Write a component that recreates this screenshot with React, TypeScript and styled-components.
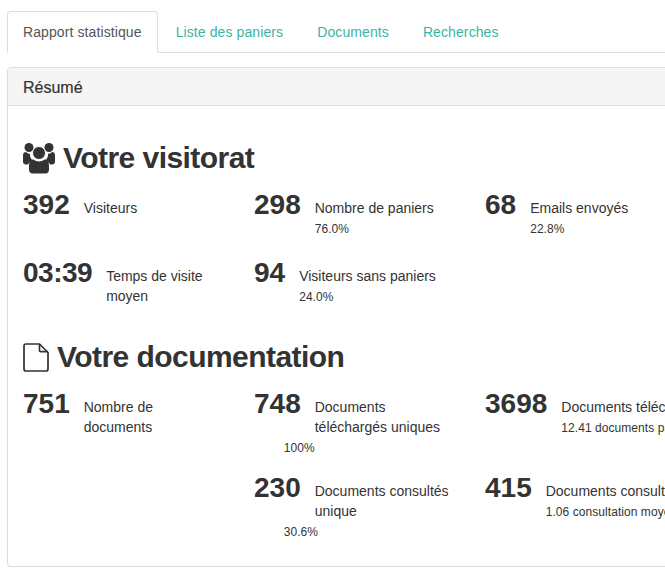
import React from 'react';
import styled, { createGlobalStyle } from 'styled-components';

const GlobalStyle = createGlobalStyle`
  html, body {
    margin: 0;
    padding: 0;
    background: #fff;
    overflow: hidden;
  }
  body {
    font-family: "Liberation Sans", Arial, sans-serif;
    font-size: 14px;
    line-height: 20px;
    color: #333;
  }
`;

const Page = styled.div`
  width: 800px;
  padding: 11px 0 0 7px;
`;

const Tabs = styled.ul`
  display: flex;
  list-style: none;
  margin: 0 0 14px;
  padding: 0;
  height: 41px;
  border-bottom: 1px solid #ddd;
`;

const Tab = styled.li<{ $active?: boolean }>`
  box-sizing: border-box;
  height: 42px;
  padding: 10px 15px;
  margin-right: 2px;
  letter-spacing: 0.1px;
  border: 1px solid ${p => (p.$active ? '#ddd' : 'transparent')};
  border-bottom-color: ${p => (p.$active ? '#fff' : 'transparent')};
  border-radius: 4px 4px 0 0;
  background: ${p => (p.$active ? '#fff' : 'transparent')};
  color: ${p => (p.$active ? '#555' : '#3ab5a6')};
`;

const Panel = styled.section`
  height: 500px;
  box-sizing: border-box;
  border: 1px solid #ddd;
  border-radius: 4px;
  box-shadow: 0 1px 1px rgba(0, 0, 0, 0.05);
`;

const PanelHeading = styled.h3`
  margin: 0;
  height: 38px;
  box-sizing: border-box;
  padding: 11px 15px 0;
  font-size: 16px;
  line-height: 18px;
  font-weight: 400;
  color: #333;
  background: #f5f5f5;
  border-bottom: 1px solid #ddd;
  border-radius: 3px 3px 0 0;
  -webkit-text-stroke: 0.2px #333;
`;

const PanelBody = styled.div`
  padding: 32px 15px 0;
`;

const SectionTitle = styled.h1`
  display: flex;
  align-items: center;
  gap: 8px;
  margin: 0 0 11px;
  height: 40px;
  font-size: 30px;
  line-height: 40px;
  font-weight: 700;
  letter-spacing: -0.55px;
  color: #333;
`;

const StatGrid = styled.div`
  display: grid;
  grid-template-columns: repeat(3, 231px);
  margin-bottom: 12px;
`;

const Stat = styled.div`
  display: flex;
  align-items: flex-start;
  gap: 14px;
  box-sizing: border-box;
  min-height: 68px;
  padding-bottom: 14px;
`;

const StatNumber = styled.span<{ $tight?: boolean }>`
  font-size: 28px;
  line-height: 32px;
  font-weight: 700;
  letter-spacing: ${p => (p.$tight ? '-0.5px' : '0')};
  color: #333;
`;

const StatBody = styled.div<{ $wide?: boolean }>`
  padding-top: 9px;
  max-width: ${p => (p.$wide ? 'none' : '138px')};
  white-space: ${p => (p.$wide ? 'nowrap' : 'normal')};
`;

const StatSub = styled.div`
  margin-top: 1px;
  font-size: 12px;
  line-height: 20px;
  letter-spacing: 0.06px;
`;

const OutdentSub = styled(StatSub)<{ $shift: number }>`
  margin-left: ${p => p.$shift}px;
`;

const UsersIcon = () => (
  <svg width="32" height="31" viewBox="0 0 32 31" fill="#333">
    <circle cx="6" cy="4.500" r="4.500" />
    <circle cx="26" cy="4.500" r="4.500" />
    <path d="M0 12.500C0 10 1 9 3 9c1 1.200 2.200 1.800 4 1.800 -.2 2.800.8 5 2.600 6.600-2.200.8-3.800 2.200-4.600 4.100H3c-2 0-3-1-3-3z" />
    <path d="M32 12.500C32 10 31 9 29 9c-1 1.200-2.200 1.800-4 1.800 .2 2.800-.8 5-2.600 6.600 2.200.8 3.800 2.200 4.600 4.100h2c2 0 3-1 3-3z" />
    <circle cx="16" cy="10" r="6.500" stroke="#fff" strokeWidth="1" />
    <path d="M10.500 16.500c1.500 1.300 3.400 2 5.500 2s4-.7 5.500-2c3 0 4.500 2.500 4.500 6.500v3.500c0 2.800-1.500 4-3.500 4h-13c-2 0-3.500-1.200-3.500-4V23c0-4 1.500-6.500 4.500-6.500z" />
  </svg>
);

const FileIcon = () => (
  <svg width="26" height="29" viewBox="0 0 26 29" fill="none" stroke="#333" strokeWidth="1.7">
    <path d="M16.500 1H3C1.800 1 1 1.800 1 3v23c0 1.200.8 2 2 2h20c1.200 0 2-.8 2-2V9.500z" />
    <path d="M16.500 1v6.500c0 .8.400 1.200 1.200 1.200H25" />
  </svg>
);

const visitorStats = [
  { value: '392', label: 'Visiteurs' },
  { value: '298', label: 'Nombre de paniers', sub: '76.0%' },
  { value: '68', label: 'Emails envoyés', sub: '22.8%' },
  { value: '03:39', label: 'Temps de visite moyen', tight: true },
  { value: '94', label: 'Visiteurs sans paniers', sub: '24.0%' },
];

export default function App() {
  return (
    <Page>
      <GlobalStyle />
      <Tabs>
        <Tab $active>Rapport statistique</Tab>
        <Tab>Liste des paniers</Tab>
        <Tab>Documents</Tab>
        <Tab>Recherches</Tab>
      </Tabs>
      <Panel>
        <PanelHeading>Résumé</PanelHeading>
        <PanelBody>
          <SectionTitle>
            <UsersIcon />
            Votre visitorat
          </SectionTitle>
          <StatGrid>
            {visitorStats.map(s => (
              <Stat key={s.value}>
                <StatNumber $tight={s.tight}>{s.value}</StatNumber>
                <StatBody>
                  {s.label}
                  {s.sub && <StatSub>{s.sub}</StatSub>}
                </StatBody>
              </Stat>
            ))}
          </StatGrid>
          <SectionTitle>
            <FileIcon />
            Votre documentation
          </SectionTitle>
          <StatGrid>
            <Stat>
              <StatNumber>751</StatNumber>
              <StatBody>Nombre de documents</StatBody>
            </Stat>
            <Stat>
              <StatNumber>748</StatNumber>
              <StatBody>
                Documents téléchargés&nbsp;uniques
                <OutdentSub $shift={-31}>100%</OutdentSub>
              </StatBody>
            </Stat>
            <Stat>
              <StatNumber>3698</StatNumber>
              <StatBody $wide>
                Documents téléchargés
                <StatSub>12.41 documents par visiteur</StatSub>
              </StatBody>
            </Stat>
            <div />
            <Stat>
              <StatNumber>230</StatNumber>
              <StatBody>
                Documents consultés unique
                <OutdentSub $shift={-31}>30.6%</OutdentSub>
              </StatBody>
            </Stat>
            <Stat>
              <StatNumber>415</StatNumber>
              <StatBody $wide>
                Documents consultés
                <StatSub>1.06 consultation moyenne</StatSub>
              </StatBody>
            </Stat>
          </StatGrid>
        </PanelBody>
      </Panel>
    </Page>
  );
}
